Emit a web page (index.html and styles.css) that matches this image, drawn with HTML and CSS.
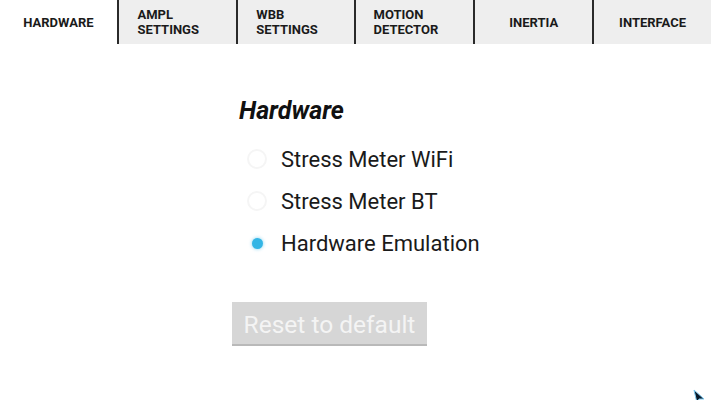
FILE: index.html
```html
<!DOCTYPE html>
<html>
<head>
<meta charset="utf-8">
<link rel="stylesheet" href="styles.css">
</head>
<body>
<div class="tabs">
  <div class="tab active"><span>HARDWARE</span></div>
  <div class="tab two"><span>AMPL<br>SETTINGS</span></div>
  <div class="tab two"><span>WBB<br>SETTINGS</span></div>
  <div class="tab two"><span>MOTION<br>DETECTOR</span></div>
  <div class="tab"><span>INERTIA</span></div>
  <div class="tab last"><span>INTERFACE</span></div>
</div>
<div class="content">
  <h1 class="title">Hardware</h1>
  <div class="radios">
    <div class="radio"><span class="ring"></span><span class="label">Stress Meter WiFi</span></div>
    <div class="radio"><span class="ring"></span><span class="label">Stress Meter BT</span></div>
    <div class="radio"><span class="ring checked"></span><span class="label">Hardware Emulation</span></div>
  </div>
  <div class="btn">Reset to default</div>
</div>
<svg class="cursor" width="16" height="16" viewBox="0 0 16 16"><path d="M2 2 L12 11 L7 11 L5 15 Z" fill="#0a1a2a" stroke="#7cc8ee" stroke-width="1"/></svg>
</body>
</html>
```
FILE: styles.css
```css
html, body {
  margin: 0;
  padding: 0;
  background: #ffffff;
  width: 711px;
  height: 400px;
  overflow: hidden;
  font-family: Roboto, "Liberation Sans", sans-serif;
}
.tabs {
  display: flex;
  height: 44px;
}
.tab {
  flex: 1;
  background: #eeeeee;
  border-right: 2px solid #2a2a2a;
  display: flex;
  align-items: center;
  justify-content: center;
  font-weight: bold;
  font-size: 13px;
  line-height: 15px;
  color: #1a1a1a;
}
.tab.active {
  background: #ffffff;
}
.tab.last {
  border-right: none;
}
.tab.two span {
  padding-right: 18px;
}
.content {
  padding-left: 232px;
  display: flex;
  flex-direction: column;
  align-items: flex-start;
}
.title {
  margin: 52px 0 0 7px;
  font-size: 25px;
  font-style: italic;
  font-weight: bold;
  line-height: 30px;
  color: #111;
}
.radios {
  margin-top: 12px;
  display: flex;
  flex-direction: column;
}
.radio {
  display: flex;
  align-items: center;
  height: 42px;
}
.ring {
  width: 20px;
  height: 20px;
  border-radius: 50%;
  border: 2px solid #f5f5f5;
  box-sizing: border-box;
  margin-left: 15px;
  margin-right: 14px;
  display: flex;
  align-items: center;
  justify-content: center;
}
.ring.checked {
  border-color: transparent;
}
.ring.checked::after {
  content: "";
  width: 11px;
  height: 11px;
  border-radius: 50%;
  background: #33b5e5;
  box-shadow: 0 0 3px 1px rgba(51, 181, 229, 0.35);
}
.label {
  font-size: 22px;
  color: #1a1a1a;
}
.btn {
  margin-top: 38px;
  width: 195px;
  height: 44px;
  box-sizing: border-box;
  padding-top: 3px;
  background: #d6d6d6;
  border-bottom: 2px solid #b9b9b9;
  color: #f4f4f4;
  font-size: 24.5px;
  display: flex;
  align-items: center;
  justify-content: center;
}
.cursor {
  position: absolute;
  left: 692px;
  top: 388px;
}
```
